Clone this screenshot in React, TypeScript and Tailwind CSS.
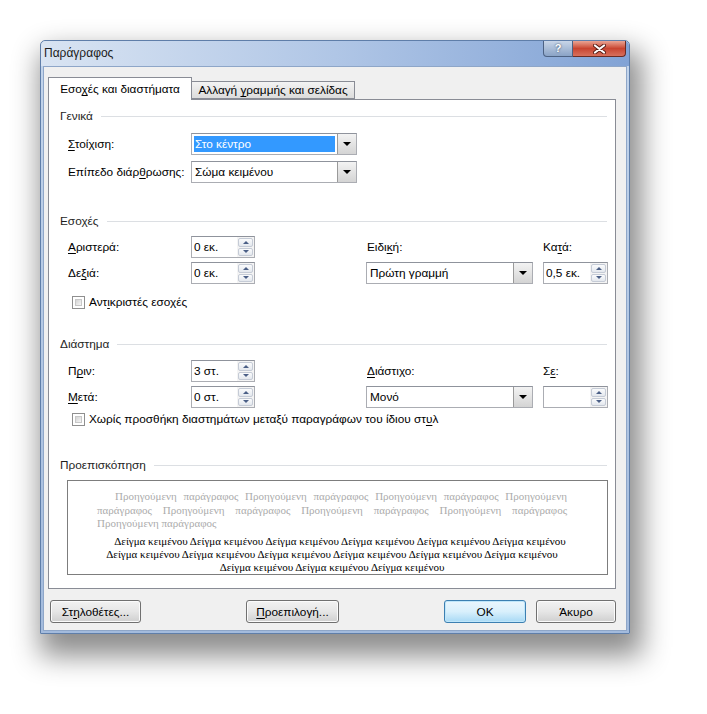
import React from "react";

// underline one letter (keyboard mnemonic)
function Mn({ t, i }: { t: string; i: number }) {
  const chars = Array.from(t);
  return (
    <span>
      {chars.slice(0, i).join("")}
      <span className="underline underline-offset-[2px]">{chars[i]}</span>
      {chars.slice(i + 1).join("")}
    </span>
  );
}

function Section({ title }: { title: string }) {
  return (
    <div className="flex h-[16px] items-center pl-[11px] pr-[8px]">
      <span className="text-[#1e1e1e]">{title}</span>
      <div className="ml-[8px] h-px flex-1 bg-[#dcdfe3]" />
    </div>
  );
}

function Arrow({ up }: { up?: boolean }) {
  return up ? (
    <div className="h-0 w-0 border-x-[3px] border-b-[3px] border-x-transparent border-b-[#4b5f86]" />
  ) : (
    <div className="h-0 w-0 border-x-[3px] border-t-[3px] border-x-transparent border-t-[#4b5f86]" />
  );
}

function Spin({ value, w = 64 }: { value: string; w?: number }) {
  return (
    <div
      className="flex h-[22px] border border-[#abadb3] border-t-[#8f939c] bg-white"
      style={{ width: w }}
    >
      <div className="flex-1 pl-[2px] leading-[20px] text-black">{value}</div>
      <div className="flex w-[17px] flex-col gap-px bg-[#f4f4f4] p-px">
        <div className="flex flex-1 items-center justify-center rounded-[2px] border border-[#c5cbd6] bg-gradient-to-b from-[#fafbfc] to-[#e4e8ee]">
          <Arrow up />
        </div>
        <div className="flex flex-1 items-center justify-center rounded-[2px] border border-[#c5cbd6] bg-gradient-to-b from-[#fafbfc] to-[#e4e8ee]">
          <Arrow />
        </div>
      </div>
    </div>
  );
}

function Combo({ value, selected, w }: { value: string; selected?: boolean; w: number }) {
  return (
    <div
      className="flex h-[22px] items-stretch border border-[#abadb3] border-t-[#8f939c] bg-white"
      style={{ width: w }}
    >
      <div className="flex flex-1 items-center p-[2px]">
        {selected ? (
          <div className="h-full w-full bg-[#3399ff] px-[1px] leading-[16px] text-white">{value}</div>
        ) : (
          <div className="px-[1px] text-black">{value}</div>
        )}
      </div>
      <div className="flex w-[19px] items-center justify-center border-l border-[#9a9a9a] bg-gradient-to-b from-[#f3f3f3] to-[#d4d4d4]">
        <div className="h-0 w-0 border-x-[4px] border-t-[4px] border-x-transparent border-t-black" />
      </div>
    </div>
  );
}

function Check({ label }: { label: React.ReactNode }) {
  return (
    <div className="flex h-[16px] items-center pl-[23px]">
      <div className="h-[13px] w-[13px] border border-[#8f8f8f] bg-white p-[2px]">
        <div className="h-full w-full border border-[#c8c8c8] bg-gradient-to-br from-[#d4d4d4] to-[#f6f6f6]" />
      </div>
      <span className="ml-[4px]">{label}</span>
    </div>
  );
}

function Btn({ w, children, def }: { w: number; children: React.ReactNode; def?: boolean }) {
  return (
    <div
      className={
        def
          ? "flex h-[23px] items-center justify-center rounded-[3px] border border-[#3c7fb1] bg-gradient-to-b from-[#eaf6fd] via-[#d9f0fc] to-[#a7d9f5] shadow-[inset_0_0_0_1px_#bfe6fa]"
          : "flex h-[23px] items-center justify-center rounded-[3px] border border-[#707070] bg-gradient-to-b from-[#f2f2f2] via-[#e6e6e6] to-[#cfcfcf] shadow-[inset_0_0_0_1px_#fbfbfb]"
      }
      style={{ width: w }}
    >
      {children}
    </div>
  );
}

const prev1 = "Προηγούμενη παράγραφος Προηγούμενη παράγραφος Προηγούμενη παράγραφος Προηγούμενη";
const prev2 = "παράγραφος Προηγούμενη παράγραφος Προηγούμενη παράγραφος Προηγούμενη παράγραφος";
const sample = "Δείγμα κειμένου";

export default function App() {
  return (
    <div className="h-[714px] w-[707px] bg-white pl-[40px] pt-[40px] font-['Liberation_Sans','Noto_Sans',sans-serif] text-[11.8px] leading-[16px] text-black">
      <div className="flex h-[594px] w-[590px] flex-col rounded-t-[5px] border border-[#5f7ea9] bg-gradient-to-b from-[#c3d5ec] to-[#a3bbdd] shadow-[6px_16px_28px_6px_rgba(0,0,0,0.45)]">
        {/* title bar */}
        <div className="flex h-[25px] rounded-t-[5px] bg-gradient-to-r from-[#d9e4f2] via-[#b0c6e6] to-[#82a3d5]">
          <div className="pl-[3px] pt-[4px] text-[12px] text-[#1b1b1b]">Παράγραφος</div>
          <div className="ml-auto mr-[3px] flex h-[16px] self-start">
            <div className="flex w-[30px] items-center justify-center rounded-bl-[4px] border border-t-0 border-[#4d6283] bg-gradient-to-b from-[#c9d6e8] to-[#8aa3c6] text-[11px] font-bold leading-none text-white [text-shadow:0_0_2px_#2a3a55]">
              ?
            </div>
            <div className="flex w-[53px] items-center justify-center rounded-br-[4px] border border-l-0 border-t-0 border-[#6b2b22] bg-gradient-to-b from-[#e9a494] via-[#c84430] to-[#d8705c]">
              <svg width="13" height="10" viewBox="0 0 13 10">
                <path d="M2 1.5 L11 8.5 M11 1.5 L2 8.5" stroke="#5a1e16" strokeWidth="4" strokeLinecap="round" />
                <path d="M2 1.5 L11 8.5 M11 1.5 L2 8.5" stroke="#ffffff" strokeWidth="2.2" strokeLinecap="round" />
              </svg>
            </div>
          </div>
        </div>

        {/* client area */}
        <div className="mx-[2px] mb-[2px] flex flex-1 flex-col border border-[#8ea6c8] bg-[#f0f0f0] pl-[4px] pr-[10px] pt-[10px]">
          {/* tabs */}
          <div className="flex items-end">
            <div className="relative z-10 -mb-px flex h-[23px] w-[144px] items-center justify-center border border-b-0 border-[#898c95] bg-white">
              <Mn t="Εσοχές και διαστήματα" i={3} />
            </div>
            <div className="flex h-[18px] w-[163px] items-center justify-center border border-l-0 border-[#898c95] bg-gradient-to-b from-[#f3f3f3] to-[#dcdcdc]">
              <span>
                Αλλαγή <Mn t="γραμμής" i={0} /> και σελίδας
              </span>
            </div>
          </div>

          {/* tab page */}
          <div className="flex h-[490px] flex-col border border-[#898c95] bg-white pt-[8px]">
            <Section title="Γενικά" />
            <div className="mt-[9px] flex h-[22px] items-center pl-[19px]">
              <div className="w-[123px]">
                <Mn t="Στοίχιση:" i={0} />
              </div>
              <Combo value="Στο κέντρο" selected w={166} />
            </div>
            <div className="mt-[6px] flex h-[22px] items-center pl-[19px]">
              <div className="w-[123px]">
                <Mn t="Επίπεδο διάρθρωσης:" i={12} />
              </div>
              <Combo value="Σώμα κειμένου" w={166} />
            </div>

            <div className="mt-[30px]">
              <Section title="Εσοχές" />
            </div>
            <div className="mt-[7px] flex h-[22px] items-center pl-[19px]">
              <div className="w-[123px]">
                <Mn t="Αριστερά:" i={0} />
              </div>
              <Spin value="0 εκ." />
              <div className="ml-[111px] w-[167px] pl-px">
                <Mn t="Ειδική:" i={4} />
              </div>
              <div className="ml-[10px] w-[65px]">
                <Mn t="Κατά:" i={2} />
              </div>
            </div>
            <div className="mt-[4px] flex h-[22px] items-center pl-[19px]">
              <div className="w-[123px]">
                <Mn t="Δεξιά:" i={2} />
              </div>
              <Spin value="0 εκ." />
              <div className="ml-[111px]">
                <Combo value="Πρώτη γραμμή" w={167} />
              </div>
              <div className="ml-[10px]">
                <Spin value="0,5 εκ." w={65} />
              </div>
            </div>
            <div className="mt-[10px]">
              <Check label={<Mn t="Αντικριστές εσοχές" i={3} />} />
            </div>

            <div className="mt-[26px]">
              <Section title="Διάστημα" />
            </div>
            <div className="mt-[8px] flex h-[22px] items-center pl-[19px]">
              <div className="w-[123px]">
                <Mn t="Πριν:" i={1} />
              </div>
              <Spin value="3 στ." />
              <div className="ml-[111px] w-[167px] pl-px">
                <Mn t="Διάστιχο:" i={0} />
              </div>
              <div className="ml-[10px] w-[65px]">
                <Mn t="Σε:" i={1} />
              </div>
            </div>
            <div className="mt-[4px] flex h-[22px] items-center pl-[19px]">
              <div className="w-[123px]">
                <Mn t="Μετά:" i={0} />
              </div>
              <Spin value="0 στ." />
              <div className="ml-[111px]">
                <Combo value="Μονό" w={167} />
              </div>
              <div className="ml-[10px]">
                <Spin value="" w={65} />
              </div>
            </div>
            <div className="mt-[3px]">
              <Check
                label={
                  <span>
                    Χωρίς προσθήκη διαστημάτων μεταξύ παραγράφων του ίδιου <Mn t="στυλ" i={2} />
                  </span>
                }
              />
            </div>

            <div className="mt-[30px]">
              <Section title="Προεπισκόπηση" />
            </div>
            <div className="ml-[18px] mt-[7px] h-[95px] w-[541px] border border-[#7d7d7d] bg-white pl-[29px] pt-[9px] font-['Liberation_Serif','Noto_Serif',serif] text-[11px] leading-[13.5px]">
              <div className="w-[470px] text-[#ababab]">
                <div className="pl-[18px] text-justify [text-align-last:justify]">{prev1}</div>
                <div className="text-justify [text-align-last:justify]">{prev2}</div>
                <div>Προηγούμενη παράγραφος</div>
              </div>
              <div className="mt-[4px] w-[470px] text-center leading-[13px] text-black">
                <div className="pl-[16px]">{Array(6).fill(sample).join(" ")}</div>
                <div>{Array(6).fill(sample).join(" ")}</div>
                <div>{Array(3).fill(sample).join(" ")}</div>
              </div>
            </div>
          </div>

          {/* bottom buttons */}
          <div className="ml-[2px] mt-[11px] flex">
            <Btn w={91}>
              <Mn t="Στηλοθέτες..." i={2} />
            </Btn>
            <div className="ml-[105px]">
              <Btn w={93}>
                <Mn t="Προεπιλογή..." i={0} />
              </Btn>
            </div>
            <div className="ml-[105px]">
              <Btn w={82} def>
                OK
              </Btn>
            </div>
            <div className="ml-[10px]">
              <Btn w={80}>Άκυρο</Btn>
            </div>
          </div>
        </div>
      </div>
    </div>
  );
}
